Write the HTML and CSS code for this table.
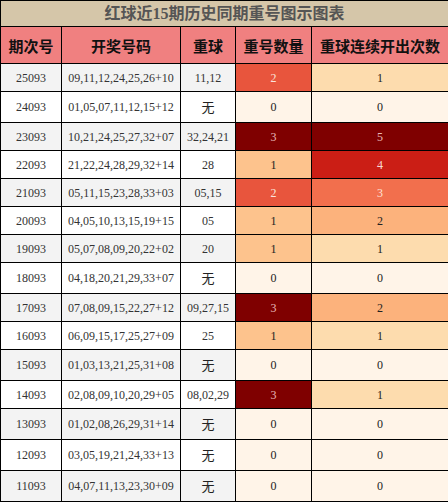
FILE: index.html
```html
<!DOCTYPE html>
<html>

<head>
    <title>红球近15期历史同期重号图示图表</title>
    <meta charset="UTF-8">
    <link rel="stylesheet" href="styles.css">
</head>

<body>
    <table class="chart">
        <colgroup>
            <col class="c-issue">
            <col class="c-draw">
            <col class="c-repeat">
            <col class="c-count">
            <col class="c-streak">
        </colgroup>
        <thead>
            <tr>
                <th colspan="5" class="title">红球近15期历史同期重号图示图表</th>
            </tr>
            <tr class="head">
                <th>期次号</th>
                <th>开奖号码</th>
                <th>重球</th>
                <th>重号数量</th>
                <th>重球连续开出次数</th>
            </tr>
        </thead>
        <tbody>
            <tr><td>25093</td><td>09,11,12,24,25,26+10</td><td>11,12</td><td class="n2">2</td><td class="s1">1</td></tr>
            <tr><td>24093</td><td>01,05,07,11,12,15+12</td><td class="none">无</td><td class="n0">0</td><td class="s0">0</td></tr>
            <tr><td>23093</td><td>10,21,24,25,27,32+07</td><td>32,24,21</td><td class="n3">3</td><td class="s5">5</td></tr>
            <tr><td>22093</td><td>21,22,24,28,29,32+14</td><td>28</td><td class="n1">1</td><td class="s4">4</td></tr>
            <tr><td>21093</td><td>05,11,15,23,28,33+03</td><td>05,15</td><td class="n2">2</td><td class="s3">3</td></tr>
            <tr><td>20093</td><td>04,05,10,13,15,19+15</td><td>05</td><td class="n1">1</td><td class="s2">2</td></tr>
            <tr><td>19093</td><td>05,07,08,09,20,22+02</td><td>20</td><td class="n1">1</td><td class="s1">1</td></tr>
            <tr><td>18093</td><td>04,18,20,21,29,33+07</td><td class="none">无</td><td class="n0">0</td><td class="s0">0</td></tr>
            <tr><td>17093</td><td>07,08,09,15,22,27+12</td><td>09,27,15</td><td class="n3">3</td><td class="s2">2</td></tr>
            <tr><td>16093</td><td>06,09,15,17,25,27+09</td><td>25</td><td class="n1">1</td><td class="s1">1</td></tr>
            <tr><td>15093</td><td>01,03,13,21,25,31+08</td><td class="none">无</td><td class="n0">0</td><td class="s0">0</td></tr>
            <tr><td>14093</td><td>02,08,09,10,20,29+05</td><td>08,02,29</td><td class="n3">3</td><td class="s1">1</td></tr>
            <tr><td>13093</td><td>01,02,08,26,29,31+14</td><td class="none">无</td><td class="n0">0</td><td class="s0">0</td></tr>
            <tr><td>12093</td><td>03,05,19,21,24,33+13</td><td class="none">无</td><td class="n0">0</td><td class="s0">0</td></tr>
            <tr><td>11093</td><td>04,07,11,13,23,30+09</td><td class="none">无</td><td class="n0">0</td><td class="s0">0</td></tr>
        </tbody>
    </table>
</body>

</html>
```

FILE: styles.css
```css
* {
    margin: 0;
    padding: 0;
    box-sizing: border-box;
}

body {
    font-family: "Liberation Serif", "Noto Sans CJK SC", serif;
    font-size: 12px;
    color: #333;
    background: #fff;
    width: 448px;
}

.chart {
    width: 448px;
    border-collapse: collapse;
    table-layout: fixed;
}

.c-issue { width: 61px; }
.c-draw { width: 119px; }
.c-repeat { width: 55px; }
.c-count { width: 76px; }
.c-streak { width: 137px; }

.chart th,
.chart td {
    border: 1px solid #000;
    text-align: center;
    white-space: nowrap;
}

.title {
    height: 26px;
    background: #d5c6a9;
    color: #555;
    font-size: 16px;
    font-weight: bold;
    line-height: 24px;
}

.head th {
    height: 37px;
    background: #f08080;
    color: #111;
    font-family: "Noto Sans CJK SC", sans-serif;
    font-size: 15px;
    font-weight: bold;
}

.chart td {
    height: 28px;
    padding: 0 2px;
    line-height: 14px;
}

.chart td.none {
    height: 31px;
    font-family: "Noto Sans CJK SC", sans-serif;
    font-size: 13px;
    color: #222;
}

tbody tr:nth-child(odd) {
    background: #f3f3f3;
}

tbody tr:nth-child(even) {
    background: #fff;
}

/* 重号数量 */
.chart .n0 { background: #fff4e8; color: #222; }
.chart .n1 { background: #fdc38d; color: #222; }
.chart .n2 { background: #e8553d; color: #fbe3dc; }
.chart .n3 { background: #7f0000; color: #e8b8b8; }

/* 重球连续开出次数 */
.chart .s0 { background: #fff4e8; color: #222; }
.chart .s1 { background: #fddcae; color: #222; }
.chart .s2 { background: #fcb27c; color: #222; }
.chart .s3 { background: #f26f4d; color: #fde2d8; }
.chart .s4 { background: #cb1e15; color: #f8d8d4; }
.chart .s5 { background: #7f0000; color: #e8b8b8; }
```
